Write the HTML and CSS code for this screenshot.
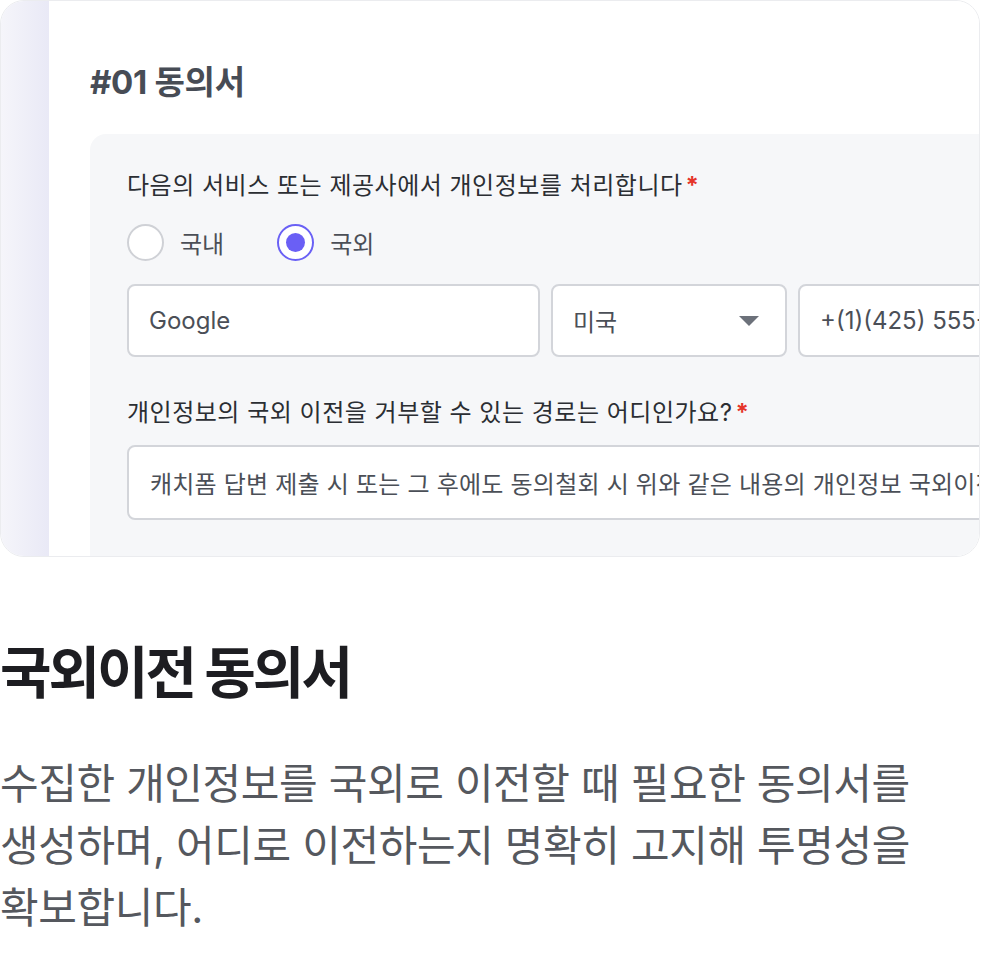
FILE: index.html
```html
<!DOCTYPE html>
<html lang="ko">
<head>
    <meta charset="UTF-8">
    <meta name="viewport" content="width=device-width, initial-scale=1.0">
    <title>국외이전 동의서</title>
    <link rel="stylesheet" href="styles.css">
</head>
<body>
    <div class="preview-card">
        <div class="preview-rail"></div>
        <div class="preview-body">
            <h2 class="form-title">#01 동의서</h2>
            <div class="form-panel">
                <p class="field-label">다음의 서비스 또는 제공사에서 개인정보를 처리합니다<span class="required">*</span></p>
                <div class="radio-group">
                    <label class="radio"><span class="radio-circle"></span>국내</label>
                    <label class="radio checked"><span class="radio-circle"></span>국외</label>
                </div>
                <div class="input-row">
                    <div class="field field-name">Google</div>
                    <div class="field field-country">
                        <span>미국</span>
                        <svg class="select-arrow" width="20" height="10" viewBox="0 0 20 10">
                            <path d="M0 0 L20 0 L10 10 Z" />
                        </svg>
                    </div>
                    <div class="field field-phone">+(1)(425) 555-0100</div>
                </div>
                <p class="field-label field-label-second">개인정보의 국외 이전을 거부할 수 있는 경로는 어디인가요?<span class="required">*</span></p>
                <div class="field field-wide">캐치폼 답변 제출 시 또는 그 후에도 동의철회 시 위와 같은 내용의 개인정보 국외이전을 거부할 수 있습니다.</div>
            </div>
        </div>
    </div>

    <h1 class="feature-title">국외이전 동의서</h1>
    <p class="feature-desc">수집한 개인정보를 국외로 이전할 때 필요한 동의서를 생성하며, 어디로 이전하는지 명확히 고지해 투명성을 확보합니다.</p>
</body>
</html>
```

FILE: styles.css
```css
body {
    margin: 0;
    background-color: #fff;
    font-family: Inter, "Noto Sans CJK KR", sans-serif;
    color: #2b2e33;
}

.preview-card {
    box-sizing: border-box;
    width: 980px;
    height: 557px;
    border: 1px solid #ebecef;
    border-radius: 24px;
    overflow: hidden;
    display: flex;
}

.preview-rail {
    width: 48px;
    flex-shrink: 0;
    background: linear-gradient(to right, #f5f5fa, #e9e9f6);
}

.preview-body {
    flex: 1;
    min-width: 0;
    display: flex;
    flex-direction: column;
    padding: 63px 0 0 41px;
    background-color: #fff;
}

.form-title {
    margin: 0 0 34px;
    font-size: 33px;
    line-height: 36px;
    font-weight: 700;
    color: #474c55;
    letter-spacing: -0.3px;
}

.form-panel {
    flex: 1;
    width: 960px;
    flex-shrink: 0;
    box-sizing: border-box;
    padding: 37px 0 0 37px;
    background-color: #f6f7f9;
    border-top-left-radius: 16px;
}

.field-label {
    margin: 0;
    font-size: 24px;
    line-height: 30px;
    color: #2b2e33;
    letter-spacing: 0.5px;
    white-space: nowrap;
}

.field-label-second {
    margin-top: 41px;
}

.required {
    color: #e5342a;
    font-weight: 700;
    margin-left: 3px;
}

.radio-group {
    display: flex;
    gap: 53px;
    margin: 23px 0;
}

.radio {
    display: flex;
    align-items: center;
    gap: 16px;
    font-size: 24px;
    color: #4b4f57;
}

.radio-circle {
    box-sizing: border-box;
    width: 37px;
    height: 37px;
    border: 2px solid #cfd1d6;
    border-radius: 50%;
    background-color: #fff;
    display: flex;
    align-items: center;
    justify-content: center;
}

.radio.checked .radio-circle {
    border-color: #6a61f5;
}

.radio.checked .radio-circle::after {
    content: "";
    width: 19px;
    height: 19px;
    border-radius: 50%;
    background-color: #6a5ff5;
}

.input-row {
    display: flex;
    gap: 11px;
}

.field {
    box-sizing: border-box;
    flex-shrink: 0;
    height: 73px;
    padding: 0 20px;
    display: flex;
    align-items: center;
    background-color: #fff;
    border: 2px solid #d3d5da;
    border-radius: 8px;
    font-size: 24px;
    color: #4b4f57;
    white-space: nowrap;
    overflow: hidden;
}

.field-name {
    width: 413px;
}

.field-country {
    width: 236px;
    justify-content: space-between;
    padding-right: 26px;
}

.select-arrow {
    fill: #6c717a;
}

.field-phone {
    width: 300px;
}

.field-wide {
    width: 880px;
    height: 75px;
    margin-top: 17px;
    padding-left: 21px;
    font-size: 24px;
    letter-spacing: 0.2px;
}

.feature-title {
    margin: 84px 0 0;
    font-size: 56px;
    line-height: 64px;
    font-weight: 700;
    color: #1d1d21;
    letter-spacing: -3px;
}

.feature-desc {
    width: 925px;
    margin: 48px 0 0;
    font-size: 42px;
    line-height: 62px;
    color: #55585e;
    letter-spacing: -0.4px;
}
```
